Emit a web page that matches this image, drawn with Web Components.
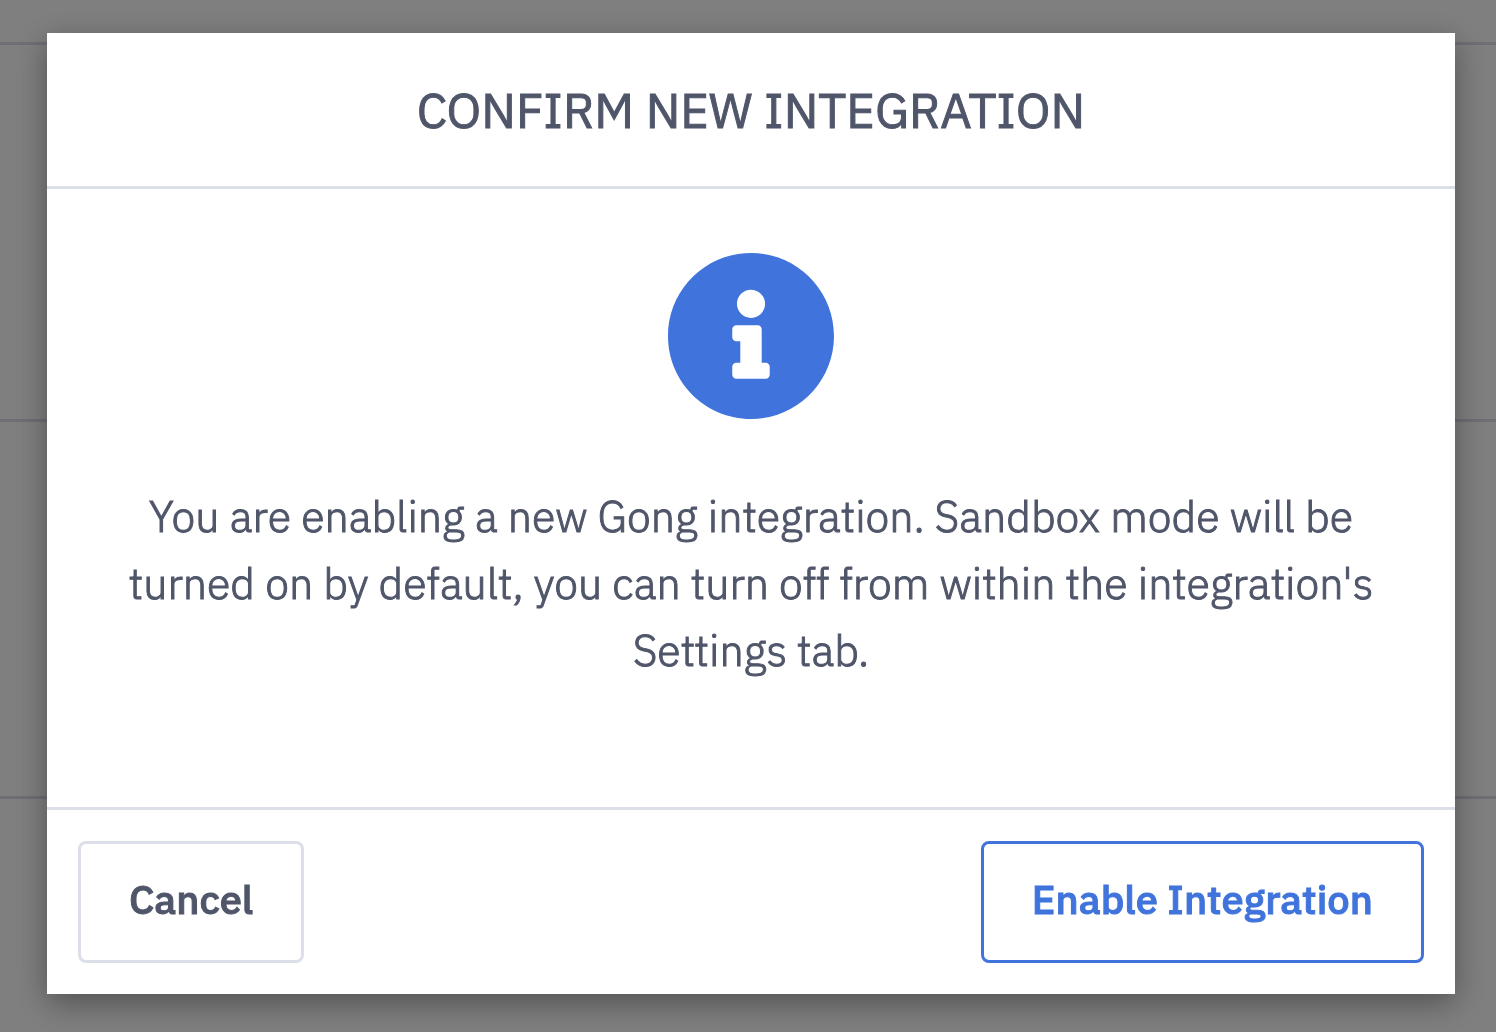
<!DOCTYPE html>
<html lang="en">
<head>
<meta charset="utf-8">
<meta name="viewport" content="width=device-width, initial-scale=1">
<title>Confirm new integration</title>
<style>
  html, body { margin: 0; height: 100%; }
  body {
    --ink: #50566a;
    --line: #dddfe8;
    --accent: #4074dc;
    font-family: "IBM Plex Sans", Roboto, "Noto Sans", sans-serif;
    color: var(--ink);
    -webkit-text-stroke: 1px;
    background: #fff;
    overflow: hidden;
  }
</style>
</head>
<body>
<row-backdrop></row-backdrop>
<modal-overlay>
  <confirm-dialog>
    <span slot="title">CONFIRM NEW INTEGRATION</span>
    <info-icon slot="icon"></info-icon>
    <span slot="message">You are enabling a new Gong integration. Sandbox mode will be turned on by default, you can turn off from within the integration's Settings tab.</span>
    <action-button slot="actions">Cancel</action-button>
    <action-button slot="actions" kind="primary">Enable Integration</action-button>
  </confirm-dialog>
</modal-overlay>

<script>
  const define = (name, html) => customElements.define(name, class extends HTMLElement {
    constructor() {
      super();
      this.attachShadow({ mode: "open" }).innerHTML = html;
    }
  });

  define("row-backdrop", `
    <style>
      :host { display: block; height: 100%; overflow: hidden; }
      div { box-sizing: border-box; height: 377px; border-bottom: 3px solid var(--line); }
      div:first-of-type { height: 45px; }
    </style>
    <div></div><div></div><div></div><div></div>`);

  define("modal-overlay", `
    <style>
      :host {
        position: fixed; inset: 0; box-sizing: border-box;
        padding: 33px 41px 38px 47px;
        background: rgba(0, 0, 0, .5);
        overflow: hidden;
      }
    </style>
    <slot></slot>`);

  define("confirm-dialog", `
    <style>
      :host { display: block; }
      section {
        background: #fff;
        box-shadow: 0 9px 30px rgba(0, 0, 0, .36);
      }
      header {
        padding: 44px 32px;
        border-bottom: 3px solid var(--line);
        text-align: center;
      }
      h1 { margin: 0; font-size: 49px; line-height: 65px; font-weight: 400; }
      .body {
        display: flex; flex-direction: column; align-items: center; gap: 64px;
        padding: 64px 64px 123px;
      }
      p { margin: 0; font-size: 43px; line-height: 67px; font-weight: 300; text-align: center; }
      footer {
        display: flex; justify-content: space-between;
        padding: 31px;
        border-top: 3px solid var(--line);
      }
    </style>
    <section role="dialog" aria-modal="true" aria-labelledby="title" aria-describedby="message">
      <header><h1 id="title"><slot name="title"></slot></h1></header>
      <div class="body">
        <slot name="icon"></slot>
        <p id="message"><slot name="message"></slot></p>
      </div>
      <footer><slot name="actions"></slot></footer>
    </section>`);

  define("info-icon", `
    <style>
      :host { display: block; width: 166px; height: 166px; }
      svg { display: block; width: 100%; height: 100%; fill: var(--accent); }
    </style>
    <svg viewBox="8 8 496 496" aria-hidden="true"><path d="M256 8C119.043 8 8 119.083 8 256c0 136.997 111.043 248 248 248s248-111.003 248-248C504 119.083 392.957 8 256 8zm0 110c23.196 0 42 18.804 42 42s-18.804 42-42 42-42-18.804-42-42 18.804-42 42-42zm56 254c0 6.627-5.373 12-12 12h-88c-6.627 0-12-5.373-12-12v-24c0-6.627 5.373-12 12-12h12v-64h-12c-6.627 0-12-5.373-12-12v-24c0-6.627 5.373-12 12-12h64c6.627 0 12 5.373 12 12v100h12c6.627 0 12 5.373 12 12v24z"/></svg>`);

  define("action-button", `
    <style>
      :host { display: block; }
      button {
        display: block; margin: 0; padding: 27px 48px 33px;
        border: 3px solid var(--line); border-radius: 8px;
        background: #fff; color: inherit;
        font: 500 40px/56px "IBM Plex Sans", Roboto, "Noto Sans", sans-serif;
        cursor: pointer;
      }
      :host([kind="primary"]) button { border-color: var(--accent); color: var(--accent); }
    </style>
    <button type="button"><slot></slot></button>`);
</script>
</body>
</html>
